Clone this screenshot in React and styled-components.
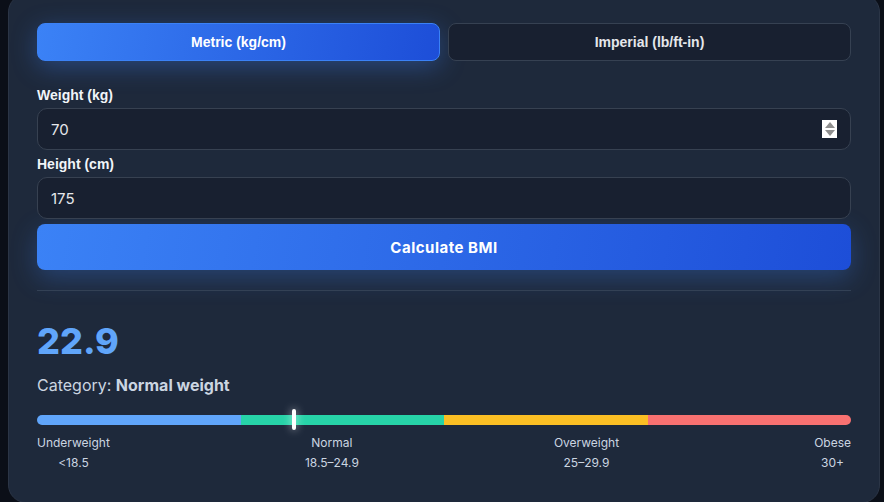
import React, { useState } from 'react';
import styled, { createGlobalStyle } from 'styled-components';

const GlobalStyle = createGlobalStyle`
    html, body {
        margin: 0;
        padding: 0;
        background: #0b0f18;
        overflow: hidden;
    }
    body {
        font-family: Inter, "Liberation Sans", sans-serif;
    }
`;

const Card = styled.div`
    box-sizing: border-box;
    width: 872px;
    margin: -6px 0 0 8px;
    padding: 28px 28px 29px;
    background: #1e293b;
    border: 1px solid #2b3546;
    border-radius: 18px;
    display: flex;
    flex-direction: column;
`;

const UnitToggle = styled.div`
    display: grid;
    grid-template-columns: 1fr 1fr;
    gap: 8px;
    margin-bottom: 26px;
`;

const UnitButton = styled.button`
    height: 38px;
    border-radius: 8px;
    font-family: "Liberation Sans", Arial, sans-serif;
    font-weight: 700;
    font-size: 14px;
    cursor: pointer;
    color: ${p => (p.active ? '#ffffff' : '#e5e7eb')};
    background: ${p => (p.active ? 'linear-gradient(100deg, #3b82f6, #1d4ed8)' : '#182030')};
    border: 1px solid ${p => (p.active ? '#3b82f6' : '#364152')};
    box-shadow: ${p => (p.active ? '0 6px 24px rgba(59, 130, 246, 0.35)' : 'none')};
`;

const Label = styled.label`
    display: block;
    font-family: "Liberation Sans", Arial, sans-serif;
    font-weight: 700;
    font-size: 14px;
    color: #f1f5f9;
    margin-bottom: 5px;
    line-height: 16px;
`;

const Field = styled.div`
    position: relative;
    margin-bottom: ${p => p.gap || 0}px;
`;

const Input = styled.input`
    box-sizing: border-box;
    width: 100%;
    height: 42px;
    padding: 0 13px;
    border-radius: 10px;
    background: #182030;
    border: 1px solid #374151;
    color: #e5e7eb;
    font-family: Inter, sans-serif;
    font-size: 15px;
    outline: none;
`;

const Spinner = styled.div`
    position: absolute;
    right: 14px;
    top: 12px;
    width: 15px;
    height: 18px;
    background: #ffffff;
    display: flex;
    flex-direction: column;
    align-items: center;
    justify-content: center;
    gap: 2px;

    span {
        width: 0;
        height: 0;
        border-left: 5px solid transparent;
        border-right: 5px solid transparent;
    }
    span.up {
        border-bottom: 6px solid #8f8f8f;
    }
    span.down {
        border-top: 6px solid #8f8f8f;
    }
`;

const CalcButton = styled.button`
    margin-top: 5px;
    height: 46px;
    border: none;
    border-radius: 8px;
    background: linear-gradient(100deg, #3b82f6, #1d4ed8);
    color: #ffffff;
    font-family: Inter, sans-serif;
    font-weight: 700;
    font-size: 15px;
    letter-spacing: 0.5px;
    cursor: pointer;
    box-shadow: 0 8px 26px rgba(59, 130, 246, 0.3);
`;

const Divider = styled.hr`
    border: none;
    border-top: 1px solid #334155;
    margin: 20px 0 0;
`;

const Result = styled.div`
    padding-top: 27px;
`;

const BmiValue = styled.div`
    font-family: Inter, sans-serif;
    font-weight: 800;
    font-size: 36px;
    line-height: 46px;
    color: #60a5fa;
`;

const Category = styled.div`
    margin-top: 11px;
    font-family: Inter, sans-serif;
    font-size: 16px;
    line-height: 20px;
    color: #cbd5e1;

    strong {
        font-weight: 700;
    }
`;

const Scale = styled.div`
    position: relative;
    margin-top: 20px;
`;

const Track = styled.div`
    display: flex;
    height: 10px;
    border-radius: 5px;
    overflow: hidden;
`;

const Segment = styled.div`
    flex: 1;
    background: ${p => p.color};
`;

const Marker = styled.div`
    position: absolute;
    top: -6px;
    width: 4px;
    height: 21px;
    margin-left: -2px;
    border-radius: 2px;
    background: #ffffff;
    box-shadow: 0 0 8px rgba(255, 255, 255, 0.7);
`;

const Legend = styled.div`
    display: flex;
    justify-content: space-between;
    margin-top: 8px;
`;

const LegendItem = styled.div`
    display: flex;
    flex-direction: column;
    align-items: center;
    font-family: Inter, sans-serif;
    font-size: 12px;
    line-height: 20px;
    color: #cbd5e1;
`;

const ranges = [
    { name: 'Underweight', range: '<18.5', color: '#60a5fa' },
    { name: 'Normal', range: '18.5–24.9', color: '#27d3a8' },
    { name: 'Overweight', range: '25–29.9', color: '#fbbf24' },
    { name: 'Obese', range: '30+', color: '#f87171' },
];

const App = () => {
    const [unit, setUnit] = useState('metric');
    const [weight, setWeight] = useState('70');
    const [height, setHeight] = useState('175');

    const bmi = 22.9;
    const pos = ((bmi - 15) / 25) * 100;

    return (
        <>
            <GlobalStyle />
            <Card>
                <UnitToggle>
                    <UnitButton active={unit === 'metric'} onClick={() => setUnit('metric')}>
                        Metric (kg/cm)
                    </UnitButton>
                    <UnitButton active={unit === 'imperial'} onClick={() => setUnit('imperial')}>
                        Imperial (lb/ft-in)
                    </UnitButton>
                </UnitToggle>

                <Label>Weight (kg)</Label>
                <Field gap={6}>
                    <Input value={weight} onChange={e => setWeight(e.target.value)} />
                    <Spinner>
                        <span className='up' />
                        <span className='down' />
                    </Spinner>
                </Field>

                <Label>Height (cm)</Label>
                <Field>
                    <Input value={height} onChange={e => setHeight(e.target.value)} />
                </Field>

                <CalcButton>Calculate BMI</CalcButton>

                <Divider />

                <Result>
                    <BmiValue>{bmi}</BmiValue>
                    <Category>
                        Category: <strong>Normal weight</strong>
                    </Category>
                    <Scale>
                        <Track>
                            {ranges.map(r => (
                                <Segment key={r.name} color={r.color} />
                            ))}
                        </Track>
                        <Marker style={{ left: `${pos}%` }} />
                    </Scale>
                    <Legend>
                        {ranges.map(r => (
                            <LegendItem key={r.name}>
                                <span>{r.name}</span>
                                <span>{r.range}</span>
                            </LegendItem>
                        ))}
                    </Legend>
                </Result>
            </Card>
        </>
    );
};

export default App;
